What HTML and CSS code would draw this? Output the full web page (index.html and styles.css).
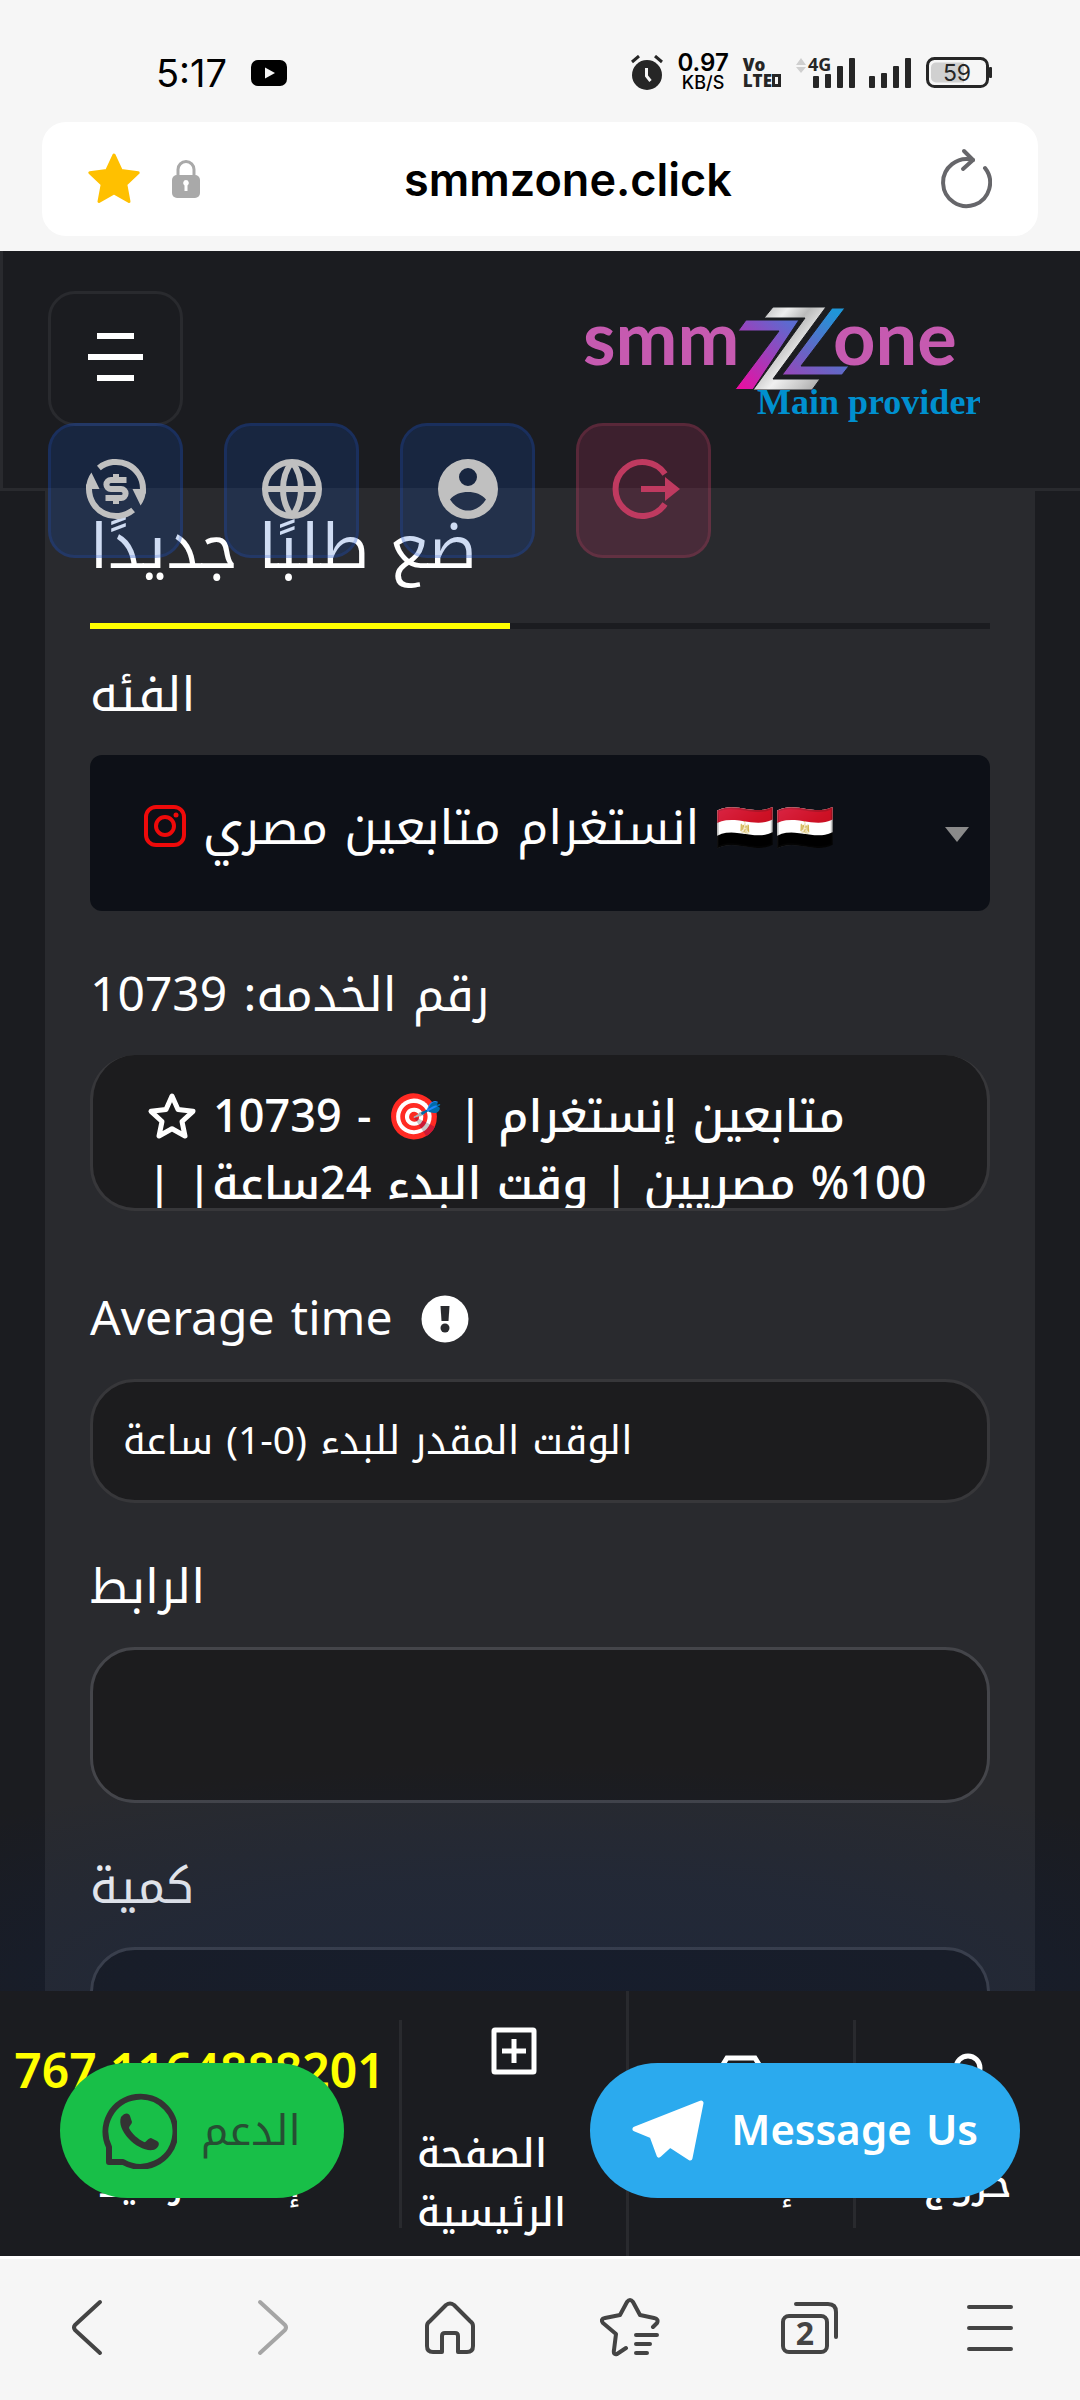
FILE: index.html
```html
<!DOCTYPE html>
<html lang="ar" dir="ltr">
<head>
<meta charset="utf-8">
<meta name="viewport" content="width=device-width, initial-scale=1">
<title>smmzone.click</title>
<link rel="stylesheet" href="styles.css">
</head>
<body>
<div class="status">
  <span class="clock">5:17</span>
  <svg width="36" height="26" viewBox="0 0 36 26"><rect width="36" height="26" rx="7"/><path d="M14 7.500v11l10-5.500z" fill="#f6f6f6"/></svg>
  <div class="status-right">
    <svg width="32" height="36" viewBox="0 0 32 36" fill="#262626"><circle cx="16" cy="20" r="15"/><path d="M1 7l7-6M31 7l-7-6" stroke="#262626" stroke-width="3"/><path d="M15.500 13v8l4 5" fill="none" stroke="#f6f6f6" stroke-width="3"/></svg>
    <span class="rate">0.97<small>KB/S</small></span>
    <span class="volte">Vo<br>LTE<i></i></span>
    <svg width="60" height="34" viewBox="0 0 60 34" fill="#262626"><path d="M1 9l5-7 5 7zM1 11l5 6 5-6z" fill="#cfcfcf"/><rect x="18" y="20" width="6" height="12" rx="1"/><rect x="30" y="18" width="6" height="14" rx="1"/><rect x="42" y="10" width="6" height="22" rx="1"/><rect x="54" y="2" width="6" height="30" rx="1"/><text class="net" x="13" y="15">4G</text></svg>
    <svg width="43" height="34" viewBox="0 0 43 34" fill="#262626"><rect x="0" y="20" width="6" height="12" rx="1"/><rect x="12" y="17" width="6" height="15" rx="1"/><rect x="24" y="10" width="6" height="22" rx="1"/><rect x="36" y="2" width="6" height="30" rx="1"/></svg>
    <svg width="66" height="32" viewBox="0 0 66 32"><rect x="1.500" y="1.500" width="60" height="28" rx="7" fill="none" stroke="#262626" stroke-width="3"/><path d="M10 5.500h28v20H10a5 5 0 0 1-5-5v-10a5 5 0 0 1 5-5z" fill="#d0d0d0"/><rect x="63" y="10" width="3" height="11" rx="1" fill="#262626"/><text x="31" y="24" font-size="23" fill="#262626" text-anchor="middle">59</text></svg>
  </div>
</div>
<div class="urlbar">
  <svg width="54" height="54" viewBox="0 0 54 54"><path d="M27 3l7.200 15.500 17 2.200-12.400 11.600 3.200 17.200L27 41 12 49.500l3.200-17.200L2.800 20.700l17-2.200z" fill="#ffc000" stroke="#ffc000" stroke-width="3" stroke-linejoin="round"/></svg>
  <svg class="lock" width="28" height="38" viewBox="0 0 28 38"><path d="M6 16V9.500a8 8 0 0 1 16 0V16" fill="none" stroke="#a9a9a9" stroke-width="3"/><rect x="0" y="15" width="28" height="23" rx="5" fill="#a9a9a9"/><path d="M14 20a3 3 0 0 1 1.500 5.500V31h-3v-5.500A3 3 0 0 1 14 20z" fill="#fff"/></svg>
  <span class="url">smmzone.click</span>
  <svg width="52" height="62" viewBox="0 0 52 62" fill="none" stroke="#66666a" stroke-width="4" stroke-linecap="round" stroke-linejoin="round"><path d="M45 20a23.500 23.500 0 1 1-12-8"/><path d="M24 3l9 9-10 9"/></svg>
</div>
<div class="site">
  <header class="header">
    <button class="menu" aria-label="Menu"><i></i><i class="long"></i><i></i></button>
    <a class="logo" href="#" aria-label="smmzone">
      <svg width="400" height="130" viewBox="580 300 400 130">
        <defs>
          <linearGradient id="z1" x1="0" y1="1" x2=".8" y2="0"><stop offset="0" stop-color="#f00aa0"/><stop offset=".5" stop-color="#a63ab8"/><stop offset="1" stop-color="#5b6bd0"/></linearGradient>
          <linearGradient id="z2" x1="0" y1="0" x2="1" y2="1"><stop offset="0" stop-color="#a8a8a8"/><stop offset=".25" stop-color="#eee"/><stop offset=".4" stop-color="#bbb"/><stop offset=".6" stop-color="#f0f0f0"/><stop offset=".8" stop-color="#c8c8c8"/><stop offset="1" stop-color="#999"/></linearGradient>
          <linearGradient id="z3" x1="0" y1="1" x2=".7" y2="0"><stop offset="0" stop-color="#9a45b8"/><stop offset=".5" stop-color="#5b6cc8"/><stop offset="1" stop-color="#1f96d8"/></linearGradient>
        </defs>
        <g fill="#c65ab0" font-family="Lato" font-weight="700" font-size="74"><text x="583" y="365">smm</text><text x="833" y="365">one</text></g>
        <path d="M746 320h53l-46 69.500h-18L779 331h-41z" fill="url(#z1)" stroke="#1b1c20"/>
        <path d="M773 307h53l-53 72h47l-8 11h-59l52-72h-41z" fill="url(#z2)" stroke="#1b1c20"/>
        <path d="M832 308h13l-44 58h48l-7 9h-60z" fill="url(#z3)" stroke="#1b1c20"/>
        <text x="757" y="414" font-family="Liberation Serif" font-weight="700" font-size="36" fill="#0090cf">Main provider</text>
      </svg>
    </a>
    <nav class="quick">
      <a class="tile" href="#" aria-label="Currency"><svg width="72" height="72" viewBox="0 0 24 24" fill="none" stroke="#c0c0c0" stroke-width="2"><path d="M6.300 5A9 9 0 0 1 21 12v1.500M17.700 19A9 9 0 0 1 3 12v-1.500"/><path d="M17.500 12H22q0 3-1.800 5.500zM6.500 12H2q0-3 1.800-5.500z" fill="#c0c0c0" stroke="none"/><path d="M15.500 9h-5.200a1.500 1.500 0 0 0 0 3h3.400a1.500 1.500 0 0 1 0 3H8.500M12 7v1.500M12 15.500V17"/></svg></a>
      <a class="tile" href="#" aria-label="Language"><svg width="72" height="72" viewBox="0 0 24 24" fill="none" stroke="#c0c0c0" stroke-width="2"><circle cx="12" cy="12" r="9"/><path d="M3 12h18M12 3c-4 5-4 13 0 18M12 3c4 5 4 13 0 18"/></svg></a>
      <a class="tile" href="#" aria-label="Account"><svg width="72" height="72" viewBox="0 0 24 24" fill="#c0c0c0"><path fill-rule="evenodd" d="M12 2a10 10 0 1 1 0 20 10 10 0 0 1 0-20zm0 3a3 3 0 1 0 0 6 3 3 0 0 0 0-6zm0 8c-2.400 0-4.700.8-6 2.500 1.500 2.300 3.600 3.700 6 3.700s4.500-1.400 6-3.700C16.700 13.800 14.400 13 12 13z"/></svg></a>
      <a class="tile logout" href="#" aria-label="Logout"><svg width="72" height="72" viewBox="0 0 24 24" fill="none" stroke="#bf3a60" stroke-width="2"><path d="M19 7a9 9 0 1 0 0 10M11 12h9"/><path d="M19 8l5 4-5 4z" fill="#bf3a60" stroke="none"/></svg></a>
    </nav>
  </header>
  <main class="content">
    <form class="card">
      <h1>ضع طلبًا جديدًا</h1>
      <div class="progress"><i></i></div>
      <label class="first" for="category">الفئه</label>
      <div class="select">
        <svg class="insta" width="44" height="44" viewBox="0 0 44 44" fill="none" stroke="#ee0a0a" stroke-width="4"><rect x="3" y="3" width="38" height="38" rx="10"/><circle cx="22" cy="22" r="9"/><circle cx="33" cy="11" r="2.500" fill="#ee0a0a" stroke="none"/></svg>
        <select id="category"><option>انستغرام متابعين مصري 🇪🇬🇪🇬</option></select>
        <svg class="arrow" width="24" height="15" viewBox="0 0 24 15"><path d="M0 0h24L12 15z" fill="#8a8a8a"/></svg>
      </div>
      <label for="service">رقم الخدمه: 10739</label>
      <button class="service" id="service" type="button" aria-haspopup="listbox"><svg class="star" width="50" height="48" viewBox="0 0 50 48"><path d="M25 4l6 13.500 15 1.800-11 10.200 3 14.500-13-7.300L12 44l3-14.500L4 19.300l15-1.800z" fill="none" stroke="#fff" stroke-width="5" stroke-linejoin="round"/></svg>10739 - 🎯 | متابعين إنستغرام 100% مصريين | وقت البدء 24ساعة| |&rlm;</button>
      <label class="wide" for="time">Average time <svg width="48" height="48" viewBox="0 0 48 48"><circle cx="24" cy="24" r="23.500" fill="#fff"/><path d="M19.500 11h9l-1 15h-7z" fill="#292a2e"/><circle cx="24" cy="33" r="4.500" fill="#292a2e"/></svg></label>
      <input class="short" id="time" readonly value="الوقت المقدر للبدء (0-1) ساعة">
      <label for="link">الرابط</label>
      <input id="link">
      <label for="quantity">كمية</label>
      <input id="quantity">
    </form>
  </main>
  <nav class="tabs">
    <a class="cell balance" href="#"><b>767.1164888201</b><span>إضافة رصيد</span></a>
    <a class="cell" href="#"><svg width="60" height="60" viewBox="0 0 60 60" fill="none" stroke="#fff" stroke-width="5"><rect x="10" y="9" width="40" height="42" rx="1"/><path d="M30 18v24M18 30h24"/></svg><span>الصفحة الرئيسية</span></a>
    <a class="cell" href="#"><svg width="60" height="60" viewBox="0 0 60 60" fill="none" stroke="#fff" stroke-width="5"><path d="M8 20l8-13h28l8 13v30H8z"/></svg><span>إضافة</span></a>
    <a class="cell" href="#"><svg width="60" height="60" viewBox="0 0 60 60" fill="none" stroke="#fff" stroke-width="5"><circle cx="30" cy="17" r="12"/><path d="M10 54V44q0-8 8-8h24q8 0 8 8v10z"/></svg><span>خروج</span></a>
  </nav>
  <a class="pill whatsapp" href="#"><svg width="76" height="76" viewBox="0 0 76 76"><path d="M8 69V54a35 35 0 1 1 14 15z" fill="none" stroke="#333" stroke-width="6" stroke-linejoin="round"/><path d="M20 24c4-5 8-4 9-1l2 6c0 2-3 4-3 6 3 6 9 11 15 14 2 1 4-4 7-4l6 3c4 2 1 8-4 9C37 59 15 38 20 24z" fill="#333"/></svg>الدعم</a>
  <a class="pill telegram" href="#"><svg width="74" height="64" viewBox="0 0 74 64"><path d="M3 30L69 4l-11 55-20-13-11 10-7-19z" fill="#fff" stroke="#fff" stroke-width="5" stroke-linejoin="round"/></svg>Message Us</a>
</div>
<nav class="browser">
  <button aria-label="Back"><svg width="60" height="60" viewBox="0 0 60 60"><path d="M40 4L15 27q-2 2.500 0 5l25 23"/></svg></button>
  <button aria-label="Forward" class="dim"><svg width="60" height="60" viewBox="0 0 60 60"><path d="M20 4l25 23q2 2.500 0 5L20 55"/></svg></button>
  <button aria-label="Home"><svg width="60" height="60" viewBox="0 0 60 60"><path d="M22 54h-9q-6 0-6-6V28q0-3 3-5L26 7q4-3 8 0l16 16q3 2 3 5v20q0 6-6 6h-9V38q0-3-3-3H25q-3 0-3 3z"/></svg></button>
  <button aria-label="Bookmarks"><svg width="60" height="60" viewBox="0 0 60 60"><path d="M26 50l-9 6q-4 1-3-4l2-16L3 25q-3-4 2-5l15-3 7-13q3-4 6 0l7 13 14 3q5 1 3 5l-4 4M36 37h21M36 46h14M36 55h11"/></svg></button>
  <button aria-label="Tabs"><svg width="62" height="60" viewBox="0 0 62 60"><rect x="4" y="18" width="44" height="36" rx="6"/><path d="M17 6h32q8 0 8 8v25"/><text x="26" y="47" text-anchor="middle">2</text></svg></button>
  <button aria-label="Menu"><svg width="60" height="60" viewBox="0 0 60 60"><path d="M9 9h42M9 30h42M9 51h42"/></svg></button>
</nav>
</body>
</html>
```
FILE: styles.css
```css
* { box-sizing: border-box; }
body {
  margin: 0;
  height: 100vh;
  display: flex;
  flex-direction: column;
  background: #f6f6f6;
  color: #fff;
  font-family: "Noto Kufi Arabic", "Noto Sans", "Noto Color Emoji", sans-serif;
  font-size: 48px;
}
button, input, select { font: inherit; color: inherit; margin: 0; }
a { color: inherit; text-decoration: none; }
svg { display: block; flex: none; }

.status {
  flex: none;
  height: 122px;
  padding: 24px 88px 0 156px;
  display: flex;
  align-items: center;
  gap: 24px;
  color: #000;
  font-family: Inter, sans-serif;
}
.clock { font-size: 38px; line-height: 40px; }
.status-right { margin-left: auto; display: flex; align-items: center; gap: 14px; }
.rate, .rate small { display: block; text-align: center; font-size: 24px; line-height: 20px; font-weight: 600; }
.rate small { font-size: 18px; font-weight: 500; }
.volte { font-size: 17px; line-height: 16px; font-weight: 800; font-family: "Open Sans", sans-serif; color: #262626; }
.volte i { display: inline-block; width: 9px; height: 13px; border: 3px solid; }
.net { font: 700 18px "Open Sans", sans-serif; }

.urlbar {
  flex: none;
  height: 114px;
  margin: 0 42px 15px;
  padding: 0 46px 0 45px;
  border-radius: 24px;
  background: #fff;
  display: flex;
  align-items: center;
}
.lock { margin-left: 31px; }
.url { flex: 1; padding: 2px 4px 0 0; text-align: center; color: #000; font: 600 45px/60px Inter, sans-serif; }

.site {
  flex: 1;
  min-height: 0;
  position: relative;
  display: flex;
  flex-direction: column;
  background: #1b1c20;
  border-bottom: 3px solid #fff;
}
.header {
  flex: none;
  height: 240px;
  padding: 40px 100px 0 45px;
  position: relative;
  z-index: 2;
  display: flex;
  align-items: flex-start;
  justify-content: space-between;
  border: solid #292a2e;
  border-width: 0 0 3px 3px;
}
.menu {
  width: 135px;
  height: 135px;
  padding: 0 0 3px;
  border: 3px solid #292a2e;
  border-radius: 27px;
  background: none;
  display: flex;
  flex-direction: column;
  align-items: center;
  justify-content: center;
  gap: 15px;
}
.menu i { width: 37px; height: 6px; background: #fff; }
.menu .long { width: 55px; }
.logo { padding-top: 9px; }
.quick { position: absolute; left: 45px; top: 172px; display: flex; gap: 41px; }
.tile {
  width: 135px;
  height: 135px;
  padding-bottom: 3px;
  border: 3px solid rgba(35, 85, 210, .2);
  border-radius: 27px;
  background: rgba(17, 78, 197, .2);
  display: grid;
  place-items: center;
}
.logout { background: rgba(202, 48, 107, .2); border-color: rgba(202, 70, 107, .2); }

.content { flex: 1; min-height: 0; overflow: hidden; padding: 0 45px; position: relative; }
.content::after {
  content: "";
  position: absolute;
  inset: auto 0 0;
  height: 230px;
  background: radial-gradient(ellipse 80% 100% at 50% 100%, rgba(6, 34, 90, .25), rgba(6, 34, 90, .18) 50%, rgba(6, 34, 90, 0));
  pointer-events: none;
}
.card { min-height: 100%; padding: 12px 45px 0; background: #292a2e; display: flex; flex-direction: column; }
h1 { margin: 0 0 30px; font-size: 62px; font-weight: 400; line-height: 90px; }
.progress { height: 6px; background: #1b1c20; }
.progress i { display: block; width: 420px; height: 6px; background: #ff0; }
label { display: flex; align-items: center; gap: 28px; line-height: 72px; padding: 48px 0 24px; }
label.first { padding-top: 30px; }
label.wide { padding-top: 72px; }
.select { position: relative; }
.insta { position: absolute; left: 53px; top: 49px; }
.arrow { position: absolute; right: 21px; top: 72px; }
select {
  display: block;
  width: 100%;
  height: 156px;
  padding: 0 60px 10px 113px;
  appearance: none;
  border: 0;
  border-radius: 12px;
  background: #0d1017;
}
input, .service {
  width: 100%;
  height: 156px;
  border: 3px solid #44454a;
  border-radius: 45px;
  background: #1c1c1e;
}
input { padding: 0 30px; font-size: 39px; }
.short { height: 124px; border-color: #37373a; }
.service {
  padding: 29px 48px 0 54px;
  border-color: #37373a;
  border-top: 0;
  overflow: hidden;
  display: block;
  text-align: left;
  font-size: 45px;
  font-weight: 500;
  line-height: 67px;
}
.star { display: inline-block; vertical-align: -8px; margin-right: 16px; }

.tabs { flex: none; height: 265px; display: flex; align-items: center; overflow: hidden; font-size: 39px; line-height: 59px; font-weight: 500; }
.cell {
  flex: 1 1 0;
  padding: 14px 15px;
  border-right: 3px solid #292a2e;
  display: flex;
  flex-direction: column;
  align-items: center;
  gap: 44px;
}
.cell:last-child { border: 0; }
.cell svg { margin-top: 17px; }
.balance { flex: none; width: 402px; }
.balance b { height: 77px; padding-top: 9px; color: #ff0; font-size: 48px; font-weight: 600; }

.pill {
  position: absolute;
  bottom: 58px;
  height: 135px;
  border-radius: 68px;
  display: flex;
  align-items: center;
  font-size: 42px;
}
.whatsapp { left: 60px; padding: 0 43px 0 41px; gap: 24px; background: #18bf48; color: #264e33; }
.telegram { right: 60px; padding: 0 42px 0 42px; gap: 25px; background: #2baaee; font-weight: 600; }

.browser { flex: none; height: 141px; padding-bottom: 4px; display: flex; align-items: center; justify-content: space-around; }
.browser button { flex: 1; padding: 0; border: 0; background: none; display: grid; place-items: center; color: #444; }
.browser svg { fill: none; stroke: currentColor; stroke-width: 4; stroke-linecap: round; stroke-linejoin: round; }
.browser text { fill: currentColor; stroke: none; font: 700 32px "Noto Sans", sans-serif; }
.browser .dim { color: #a5a5a5; }
```
